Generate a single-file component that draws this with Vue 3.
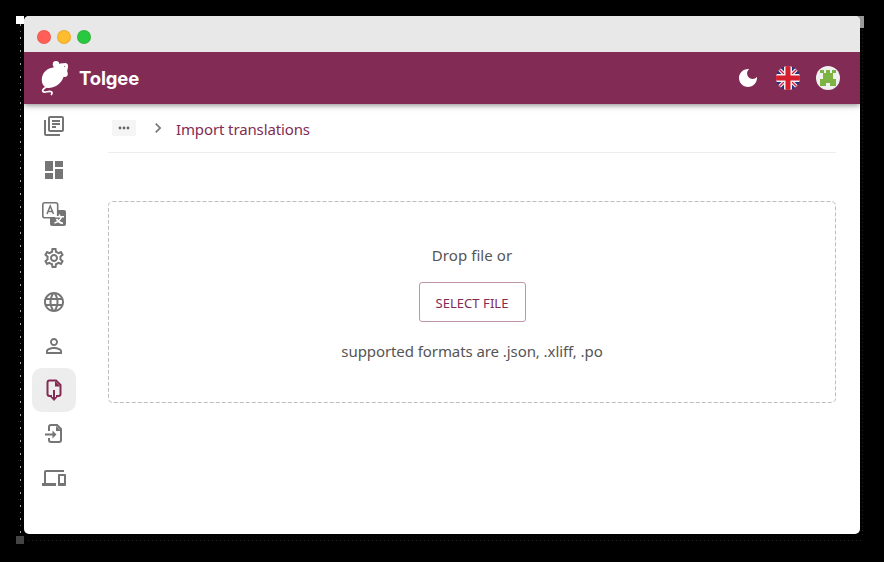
<script setup>
const nav = [
  { name: 'Projects', path: 'M4 6H2v14c0 1.1.9 2 2 2h14v-2H4V6zm16-4H8c-1.1 0-2 .9-2 2v12c0 1.1.9 2 2 2h12c1.1 0 2-.9 2-2V4c0-1.1-.9-2-2-2zm0 14H8V4h12v12zM10 9h8v2h-8zm0 3h4v2h-4zm0-6h8v2h-8z' },
  { name: 'Dashboard', path: 'M3 13h8V3H3v10zm0 8h8v-6H3v6zm10 0h8V11h-8v10zm0-18v6h8V3h-8z' },
  { name: 'Translations', translate: true },
  { name: 'Settings', path: 'M19.43 12.98c.04-.32.07-.64.07-.98 0-.34-.03-.66-.07-.98l2.11-1.65c.19-.15.24-.42.12-.64l-2-3.46c-.09-.16-.26-.25-.44-.25-.06 0-.12.01-.17.03l-2.49 1c-.52-.4-1.08-.73-1.69-.98l-.38-2.65C14.46 2.18 14.25 2 14 2h-4c-.25 0-.46.18-.49.42l-.38 2.65c-.61.25-1.17.59-1.69.98l-2.49-1c-.06-.02-.12-.03-.18-.03-.17 0-.34.09-.43.25l-2 3.46c-.13.22-.07.49.12.64l2.11 1.65c-.04.32-.07.65-.07.98 0 .33.03.66.07.98l-2.11 1.65c-.19.15-.24.42-.12.64l2 3.46c.09.16.26.25.44.25.06 0 .12-.01.17-.03l2.49-1c.52.4 1.08.73 1.69.98l.38 2.65c.03.24.24.42.49.42h4c.25 0 .46-.18.49-.42l.38-2.65c.61-.25 1.17-.59 1.69-.98l2.49 1c.06.02.12.03.18.03.17 0 .34-.09.43-.25l2-3.46c.12-.22.07-.49-.12-.64l-2.11-1.65zm-1.98-1.71c.04.31.05.52.05.73 0 .21-.02.43-.05.73l-.14 1.13.89.7 1.08.84-.7 1.21-1.27-.51-1.04-.42-.9.68c-.43.32-.84.56-1.25.73l-1.06.43-.16 1.13-.2 1.35h-1.4l-.19-1.35-.16-1.13-1.06-.43c-.43-.18-.83-.41-1.23-.71l-.91-.7-1.06.43-1.27.51-.7-1.21 1.08-.84.89-.7-.14-1.13c-.03-.31-.05-.54-.05-.74s.02-.43.05-.73l.14-1.13-.89-.7-1.08-.84.7-1.21 1.27.51 1.04.42.9-.68c.43-.32.84-.56 1.25-.73l1.06-.43.16-1.13.2-1.35h1.39l.19 1.35.16 1.13 1.06.43c.43.18.83.41 1.23.71l.91.7 1.06-.43 1.27-.51.7 1.21-1.07.85-.89.7.14 1.13zM12 8c-2.21 0-4 1.79-4 4s1.790 4 4 4 4-1.790 4-4-1.790-4-4-4zm0 6c-1.100 0-2-.9-2-2s.9-2 2-2 2 .9 2 2-.9 2-2 2z' },
  { name: 'Languages', path: 'M11.99 2C6.47 2 2 6.48 2 12s4.47 10 9.990 10C17.520 22 22 17.520 22 12S17.520 2 11.990 2zm6.930 6h-2.950c-.32-1.25-.78-2.450-1.380-3.560 1.840.63 3.370 1.910 4.330 3.560zM12 4.040c.83 1.200 1.480 2.530 1.910 3.960h-3.820c.43-1.430 1.080-2.760 1.910-3.960zM4.260 14C4.100 13.360 4 12.690 4 12s.1-1.360.26-2h3.380c-.08.66-.14 1.320-.14 2s.06 1.340.14 2H4.260zm.82 2h2.950c.32 1.250.78 2.450 1.380 3.560-1.840-.63-3.370-1.900-4.330-3.560zm2.950-8H5.080c.96-1.660 2.490-2.930 4.330-3.560C8.810 5.550 8.350 6.750 8.030 8zM12 19.960c-.83-1.200-1.480-2.530-1.910-3.960h3.820c-.43 1.430-1.080 2.760-1.910 3.960zM14.340 14H9.660c-.09-.66-.16-1.320-.16-2s.07-1.350.16-2h4.680c.09.65.16 1.320.16 2s-.07 1.340-.16 2zm.25 5.560c.6-1.110 1.060-2.310 1.380-3.560h2.950c-.96 1.650-2.490 2.930-4.330 3.560zM16.360 14c.08-.66.14-1.320.14-2s-.06-1.340-.14-2h3.380c.16.64.26 1.310.26 2s-.1 1.360-.26 2h-3.380z' },
  { name: 'Members', path: 'M12 5.900c1.160 0 2.100.94 2.100 2.100s-.94 2.100-2.100 2.100S9.900 9.160 9.900 8s.94-2.100 2.100-2.100m0 9c2.970 0 6.100 1.460 6.100 2.100v1.100H5.900V17c0-.64 3.130-2.100 6.100-2.100M12 4C9.790 4 8 5.790 8 8s1.790 4 4 4 4-1.790 4-4-1.790-4-4-4zm0 9c-2.670 0-8 1.340-8 4v3h16v-3c0-2.660-5.330-4-8-4z' },
  { name: 'Import', active: true, stroke: 'M10 18H7.500Q5.500 18 5.500 16V4.500Q5.500 2.500 7.500 2.500H14l4.500 4.500V16q0 2-2 2H14M12 12v8', path: 'M13 3v5.500h5.500zM8.300 19h7.400L12 23z' },
  { name: 'Export', stroke: 'M7 9V5q0-2 2-2h6l4 4v11q0 2-2 2H9q-2 0-2-2v-2M3 12.500h9', path: 'M14 4v5h5.500zM10.500 8.500v8l4-4z' },
  { name: 'Integrate', path: 'M4 6h18V4H4c-1.100 0-2 .9-2 2v11H0v3h14v-3H4V6zm19 2h-6c-.55 0-1 .45-1 1v10c0 .55.45 1 1 1h6c.55 0 1-.45 1-1V9c0-.55-.45-1-1-1zm-1 9h-4v-7h4v7z' },
]
</script>

<template>
  <div class="desktop">
    <i class="edge edge-left"></i>
    <i class="edge edge-right"></i>
    <i class="edge edge-bottom"></i>
    <i class="chip chip-tl"></i>
    <i class="chip chip-tr"></i>
    <i class="chip chip-bl"></i>
    <div class="window">
      <div class="titlebar"><i class="dot red"></i><i class="dot yellow"></i><i class="dot green"></i></div>
      <header class="header">
        <svg class="mouse" viewBox="0 0 28 36" width="28" height="36">
          <g fill="#fff">
            <path d="M12 7.500C3 9 0 16 1 22c1 5 5 7 10 5.500 6-1.500 10-5.500 11.500-10.500L25 11l-6-6z" />
            <circle cx="15" cy="4.300" r="3.200" />
            <circle cx="23.500" cy="13.800" r="3.300" />
            <path d="M14 6l5-2.500 6-.5q2.500 1 2 4l-1 5-5 4z" />
          </g>
          <path d="M5 27.300c-6 3.500-3 5.500 1 4.500 4-1 6 0 4.500 2.700" fill="none" stroke="#fff" stroke-width="1.700" stroke-linecap="round" />
          <circle cx="23.500" cy="6.200" r=".5" fill="#822b55" />
        </svg>
        <span class="brand">Tolgee</span>
        <div class="actions">
          <svg width="24" height="24" viewBox="0 0 24 24"><path fill="#fff" d="M12 3c-4.970 0-9 4.030-9 9s4.030 9 9 9 9-4.030 9-9c0-.46-.04-.92-.1-1.360-.98 1.370-2.580 2.260-4.400 2.260-2.980 0-5.400-2.420-5.400-5.400 0-1.810.89-3.420 2.260-4.400-.44-.06-.9-.1-1.360-.1z" /></svg>
          <svg class="round" width="24" height="24" viewBox="0 0 24 24">
            <path fill="#26327a" d="M0 0h24v24H0z" />
            <path stroke="#f2eef2" stroke-width="3.600" d="M0 0l24 24M24 0L0 24" />
            <path stroke="#d32339" stroke-width="1.300" d="M0 0l24 24M24 0L0 24" />
            <path stroke="#f2eef2" stroke-width="8" d="M12 0v24M0 12h24" />
            <path stroke="#d51f2e" stroke-width="5" d="M12 0v24M0 12h24" />
          </svg>
          <svg class="round" width="24" height="24" viewBox="0 0 24 24" shape-rendering="crispEdges">
            <path fill="#f0f0f0" d="M0 0h24v24H0z" />
            <path fill="#7cb342" d="M4 4h4v3H4zM10 4h4v3h-4zM16 4h4v3h-4zM7 7h10v6H7zM4 13h16v4H4zM4 17h6v3H4zM14 17h6v3h-6z" />
          </svg>
        </div>
      </header>
      <div class="body">
        <nav class="rail">
          <a v-for="item in nav" :key="item.name" class="item" :class="{ active: item.active }">
            <svg width="24" height="24" viewBox="0 0 24 24">
              <template v-if="item.translate">
                <path fill="currentColor" d="M10 8h12q2 0 2 2v12q0 2-2 2H10q-2 0-2-2V10q0-2 2-2z" />
                <rect x=".8" y=".8" width="14.900" height="14.900" rx="2" fill="#fff" stroke="currentColor" stroke-width="1.600" />
                <path d="M5 12l3.200-8L11.500 12M6.200 9.400h4" fill="none" stroke="currentColor" stroke-width="1.500" />
                <path d="M17.500 12.500v2M13 14.700h9M19.500 15q-2 4.500-7 6M14.500 17q2 3.500 6.500 4.500" fill="none" stroke="#fff" stroke-width="1.600" />
              </template>
              <path v-if="item.stroke" :d="item.stroke" fill="none" stroke="currentColor" stroke-width="2" />
              <path v-if="item.path" :d="item.path" fill="currentColor" />
            </svg>
          </a>
        </nav>
        <main class="main">
          <div class="crumbs">
            <span class="more"><svg width="12" height="4" viewBox="0 0 12 4" fill="#666"><circle cx="2" cy="2" r="1.400" /><circle cx="6" cy="2" r="1.400" /><circle cx="10" cy="2" r="1.400" /></svg></span>
            <svg class="chev" width="20" height="20" viewBox="0 0 24 24"><path fill="#777" d="M10 6 8.590 7.410 13.170 12l-4.580 4.590L10 18l6-6z" /></svg>
            <span class="current">Import translations</span>
          </div>
          <section class="drop">
            <svg class="outline" width="728" height="202"><rect x=".5" y=".5" width="727" height="201" rx="4" fill="none" stroke="#bdbdbd" stroke-dasharray="4 2" /></svg>
            <p class="lead">Drop file or</p>
            <button class="select">SELECT FILE</button>
            <p class="formats">supported formats are .json, .xliff, .po</p>
          </section>
        </main>
      </div>
    </div>
  </div>
</template>

<style>
body { background: #000; }
</style>
<style scoped>
.desktop { position: relative; box-sizing: border-box; width: 884px; height: 562px; padding: 16px 24px 28px; background: #000; font-family: "Noto Sans", sans-serif; overflow: hidden; }
.window { position: relative; display: flex; flex-direction: column; width: 836px; height: 518px; border-radius: 5px; overflow: hidden; background: #fff; }
.titlebar { position: relative; z-index: 2; display: flex; align-items: center; gap: 6px; height: 36px; padding: 6px 0 0 13px; box-sizing: border-box; flex: none; background: #e8e8e8; }
.dot { width: 14px; height: 14px; border-radius: 50%; box-sizing: border-box; border: 1px solid rgba(100, 60, 0, .12); background-clip: border-box; }
.red { background: #ff5f57; }
.yellow { background: #febc2e; }
.green { background: #28c840; }
.header { position: relative; z-index: 1; display: flex; align-items: center; height: 52px; flex: none; padding: 0 20px 0 17px; box-sizing: border-box; background: #822b55; box-shadow: 0 1px 6px rgba(0, 0, 0, .5); }
.brand { margin-left: 10px; color: #fff; font: 700 18.500px/24px Inter, sans-serif; letter-spacing: -.15px; }
.actions { display: flex; gap: 16px; margin-left: auto; }
.round { border-radius: 50%; }
.body { display: flex; flex: 1; }
.rail { display: flex; flex-direction: column; width: 60px; padding-left: 8px; box-sizing: border-box; }
.item { display: flex; align-items: center; justify-content: center; width: 44px; height: 44px; border-radius: 10px; color: #757575; }
.item.active { background: #ededed; color: #822b55; }
.main { padding: 0 24px; width: 728px; }
.crumbs { display: flex; align-items: center; height: 49px; box-sizing: border-box; padding-left: 4px; border-bottom: 1px solid #ededed; }
.more { display: flex; align-items: center; justify-content: center; width: 24px; height: 16px; background: #f5f5f5; }
.chev { margin: 0 8px 0 12px; }
.current { color: #822b55; font-size: 15px; line-height: 24px; letter-spacing: -.12px; padding-top: 2px; }
.drop { position: relative; display: flex; flex-direction: column; align-items: center; box-sizing: border-box; height: 202px; margin-top: 48px; padding-top: 42px; color: #555; font-size: 15px; }
.outline { position: absolute; inset: 0; }
p { margin: 0; line-height: 24px; }
.lead { letter-spacing: .08px; }
.formats { letter-spacing: -.08px; }
.select { width: 107px; height: 40px; margin: 15px 0 17px; padding: 2px 0 0; box-sizing: border-box; border: 1px solid #c095aa; border-radius: 3px; background: #fff; color: #822b55; font: 13px/20px "Noto Sans", sans-serif; letter-spacing: .05px; }
.edge { position: absolute; opacity: .25; }
.edge-left { left: 20px; top: 24px; width: 1px; height: 512px; background: repeating-linear-gradient(#fff 0 2px, #000 2px 7px, #888 7px 8px, #000 8px 13px); opacity: .65; }
.edge-right { left: 862px; top: 30px; width: 1px; height: 505px; background: repeating-linear-gradient(#999 0 1px, #000 1px 4px); }
.edge-bottom { left: 28px; top: 540px; width: 834px; height: 1px; background: repeating-linear-gradient(90deg, #999 0 1px, #000 1px 4px); }
.chip { position: absolute; }
.chip-tl { left: 16px; top: 16px; width: 8px; height: 8px; background: #fff; }
.chip-tr { left: 856px; top: 16px; width: 8px; height: 12px; background: #999; }
.chip-bl { left: 16px; top: 536px; width: 8px; height: 8px; background: #444; }
</style>
